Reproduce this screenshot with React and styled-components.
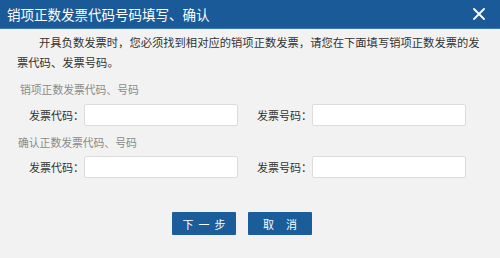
import React from "react";
import styled, { createGlobalStyle } from "styled-components";

const Global = createGlobalStyle`
  html, body {
    margin: 0;
    padding: 0;
    background: #f2f2f2;
  }
  body {
    font-family: "Noto Sans CJK SC", "Noto Sans", sans-serif;
  }
`;

const Dialog = styled.div`
  width: 500px;
  height: 258px;
  background: #f2f2f2;
  display: flex;
  flex-direction: column;
  overflow: hidden;
`;

const TitleBar = styled.div`
  height: 29px;
  background: #1b5a98;
  border-bottom: 1px solid #3f78b0;
  box-sizing: border-box;
  display: flex;
  align-items: center;
  justify-content: space-between;
  padding: 0 15px 0 7px;
`;

const Title = styled.span`
  color: #fff;
  font-size: 13.5px;
  line-height: 29px;
`;

const Close = styled.svg`
  width: 12px;
  height: 12px;
  stroke: #fff;
  stroke-width: 1.8;
  stroke-linecap: round;
  fill: none;
`;

const Body = styled.div`
  padding: 4px 20px 0 17px;
  display: flex;
  flex-direction: column;
`;

const Intro = styled.p`
  margin: 0 0 7px;
  font-size: 11.3px;
  line-height: 19.5px;
  color: #333;
  text-indent: 22px;
`;

const Section = styled.div`
  font-size: 10.8px;
  line-height: 20px;
  color: #8a8a8a;
  padding-left: ${(p) => p.indent || 0}px;
`;

const Row = styled.div`
  display: flex;
  gap: 19px;
  padding-left: 12px;
  margin: ${(p) => p.margin || "5px 0 6px"};
`;

const Field = styled.label`
  display: flex;
  align-items: center;
`;

const Label = styled.span`
  width: 55px;
  font-size: 11px;
  color: #333;
  white-space: nowrap;
`;

const Input = styled.input`
  width: 154px;
  height: 22px;
  box-sizing: border-box;
  border: 1px solid #dcdcdc;
  border-radius: 2px;
  background: #fff;
  outline: none;
  padding: 0 4px;
`;

const Actions = styled.div`
  display: flex;
  justify-content: center;
  gap: 12px;
  margin-top: 34px;
  padding-right: 13px;
`;

const Button = styled.button`
  width: 64px;
  height: 23px;
  border: none;
  border-radius: 1px;
  background: #1b5c9b;
  color: #fff;
  font-family: "Noto Sans CJK SC", sans-serif;
  font-size: 11px;
  white-space: nowrap;
  letter-spacing: ${(p) => p.spacing}px;
  padding: 0 0 0 ${(p) => p.spacing}px;
  cursor: pointer;
`;

const InvoiceRow = ({ margin }) => (
  <Row margin={margin}>
    <Field>
      <Label>发票代码：</Label>
      <Input />
    </Field>
    <Field>
      <Label>发票号码：</Label>
      <Input />
    </Field>
  </Row>
);

export default function App() {
  return (
    <>
      <Global />
      <Dialog>
        <TitleBar>
          <Title>销项正数发票代码号码填写、确认</Title>
          <Close viewBox="0 0 12 12">
            <path d="M1 1L11 11M11 1L1 11" />
          </Close>
        </TitleBar>
        <Body>
          <Intro>
            开具负数发票时，您必须找到相对应的销项正数发票，请您在下面填写销项正数发票的发票代码、发票号码。
          </Intro>
          <Section indent={3}>销项正数发票代码、号码</Section>
          <InvoiceRow />
          <Section indent={1}>确认正数发票代码、号码</Section>
          <InvoiceRow margin="4px 0 0" />
          <Actions>
            <Button spacing={5}>下一步</Button>
            <Button spacing={12}>取消</Button>
          </Actions>
        </Body>
      </Dialog>
    </>
  );
}
